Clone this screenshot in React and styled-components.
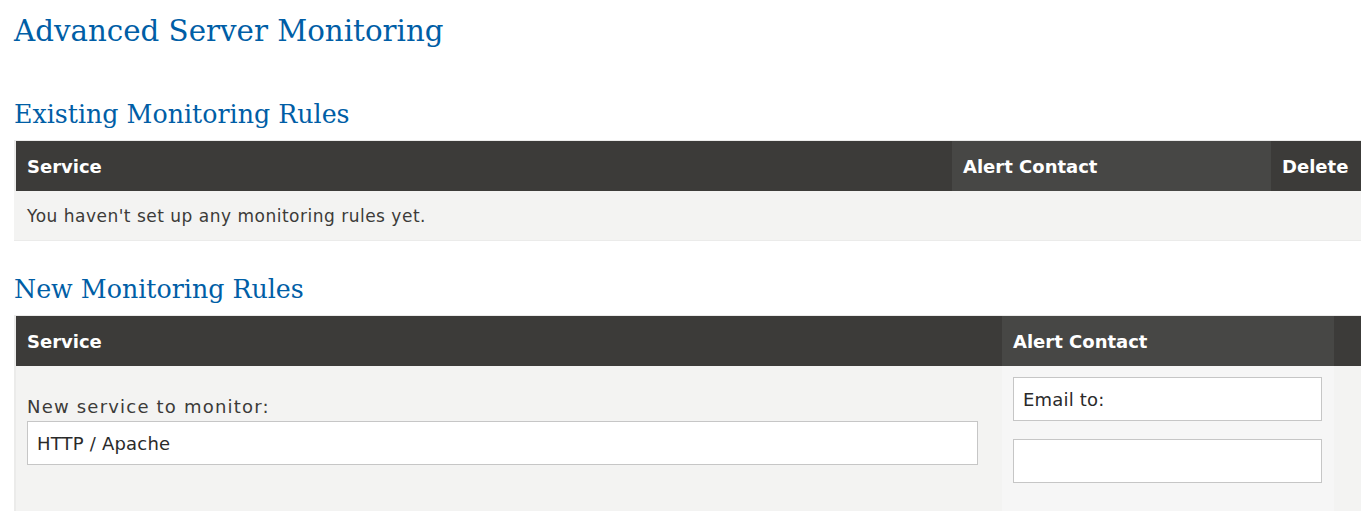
import React from "react";
import styled, { createGlobalStyle } from "styled-components";

const GlobalStyle = createGlobalStyle`
  html, body {
    margin: 0;
    padding: 0;
    background: #fff;
    overflow: hidden;
  }
  body {
    font-family: "DejaVu Sans", "Open Sans", sans-serif;
    color: #3c3b39;
  }
`;

const Page = styled.div`
  padding: 0 0 0 14px;
`;

const Title = styled.h1`
  margin: 0;
  padding-top: 11px;
  font-family: "DejaVu Serif", "Liberation Serif", serif;
  font-weight: 400;
  font-size: 29.3px;
  line-height: 40px;
  color: #005ea6;
`;

const SectionTitle = styled.h2`
  margin: ${(p) => p.$top}px 0 0;
  font-family: "DejaVu Serif", "Liberation Serif", serif;
  font-weight: 400;
  font-size: 25.3px;
  line-height: 34px;
  color: #005ea6;
`;

const Table = styled.div`
  margin-top: 8px;
  border: 1px solid #ebebea;
  border-left-width: 2px;
  border-right: none;
`;

const Row = styled.div`
  display: grid;
  grid-template-columns: ${(p) => p.$cols};
`;

const HeadCell = styled.div`
  background: ${(p) => (p.$light ? "#474745" : "#3c3b39")};
  color: #fff;
  font-weight: 600;
  font-size: 18px;
  height: 50px;
  display: flex;
  align-items: center;
  padding: 0 11px;
  white-space: nowrap;
  overflow: hidden;
`;

const BodyCell = styled.div`
  background: ${(p) => (p.$light ? "#f6f6f6" : "#f3f3f2")};
  padding: ${(p) => p.$pad || "0 11px"};
  color: #3c3b39;
`;

const EmptyRow = styled.div`
  background: #f3f3f2;
  height: 49px;
  display: flex;
  align-items: center;
  padding: 0 13px;
  margin-left: -2px;
  font-size: 17px;
  letter-spacing: 0.5px;
  color: #3c3b39;
`;

const Label = styled.label`
  display: block;
  font-size: 18px;
  letter-spacing: 1.2px;
  line-height: 22px;
  margin-bottom: 3px;
  color: #3c3b39;
`;

const Input = styled.input`
  box-sizing: border-box;
  display: block;
  width: 100%;
  height: 44px;
  margin: 0 0 ${(p) => p.$gap || 0}px;
  padding: 0 9px;
  border: 1px solid #c6c6c6;
  background: #fff;
  font-family: inherit;
  font-size: 18px;
  letter-spacing: 0.2px;
  color: #2a2a2a;
  outline: none;
  &::placeholder {
    color: #2a2a2a;
  }
`;

export default function App() {
  return (
    <Page>
      <GlobalStyle />
      <Title>Advanced Server Monitoring</Title>

      <SectionTitle $top={47}>Existing Monitoring Rules</SectionTitle>
      <Table>
        <Row $cols="936px 319px 1fr">
          <HeadCell>Service</HeadCell>
          <HeadCell $light>Alert Contact</HeadCell>
          <HeadCell>Delete</HeadCell>
        </Row>
        <EmptyRow>You haven't set up any monitoring rules yet.</EmptyRow>
      </Table>

      <SectionTitle $top={32}>New Monitoring Rules</SectionTitle>
      <Table>
        <Row $cols="986px 332px 1fr">
          <HeadCell>Service</HeadCell>
          <HeadCell $light>Alert Contact</HeadCell>
          <HeadCell />
        </Row>
        <Row $cols="986px 332px 1fr">
          <BodyCell $pad="30px 24px 60px 11px">
            <Label htmlFor="svc">New service to monitor:</Label>
            <Input id="svc" defaultValue="HTTP / Apache" />
          </BodyCell>
          <BodyCell $light $pad="11px 12px 40px 11px">
            <Input placeholder="Email to:" $gap={18} />
            <Input />
          </BodyCell>
          <BodyCell />
        </Row>
      </Table>
    </Page>
  );
}
